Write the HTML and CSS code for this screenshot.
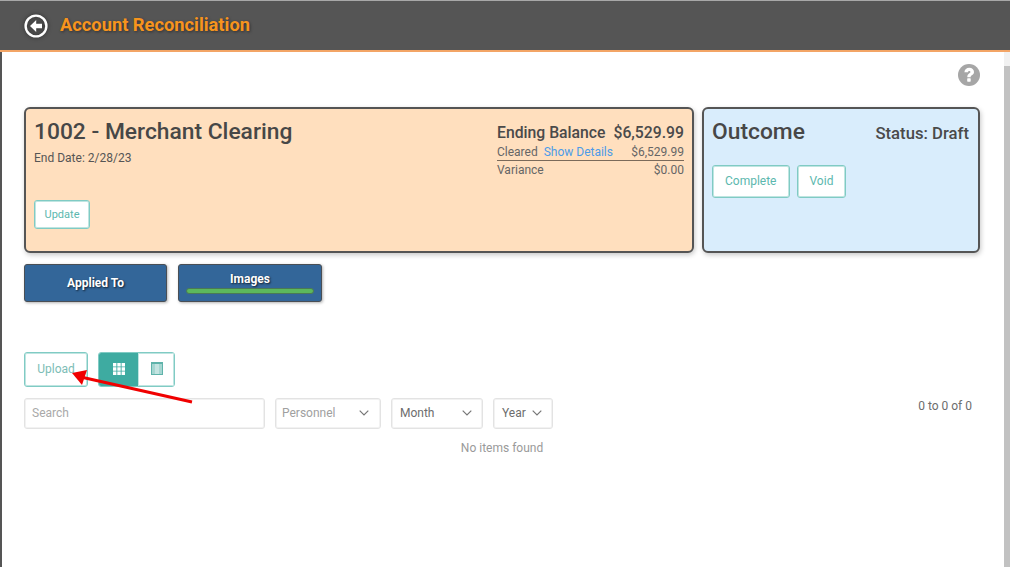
FILE: index.html
```html
<!DOCTYPE html>
<html lang="en">
<head>
<meta charset="utf-8">
<title>Account Reconciliation</title>
<link rel="stylesheet" href="styles.css">
</head>
<body>
<header class="topbar">
  <svg class="back" viewBox="0 0 24 24" width="24" height="24" aria-hidden="true">
    <circle cx="12" cy="12" r="10.4" fill="none" stroke="#fff" stroke-width="2.4"/>
    <path d="M12.2 6 6 12l6.2 6v-3.8H18V9.800h-5.800z" fill="#fff"/>
  </svg>
  <h1 class="title">Account Reconciliation</h1>
</header>
<div class="shell">
  <main class="content">
    <div class="help-row">
      <svg class="help" viewBox="0 0 24 24" width="24" height="24" aria-hidden="true">
        <circle cx="12" cy="12" r="11" fill="#a6a6a6"/>
        <path d="M7.400 9.300C7.600 6.500 9.600 4.800 12.300 4.800c2.700 0 4.700 1.700 4.700 4.100 0 1.800-1 2.700-2.200 3.400-.9.600-1.100.9-1.100 1.900h-3.400c0-2 .5-2.900 1.800-3.700.9-.6 1.300-.9 1.300-1.500 0-.6-.5-1-1.100-1-.8 0-1.200.5-1.300 1.300z" fill="#fff"/>
        <rect x="10.200" y="15.200" width="3.500" height="3.500" rx=".6" fill="#fff"/>
      </svg>
    </div>
    <section class="cards">
      <article class="card card-main">
        <div class="card-left">
          <h2 class="card-title">1002 - Merchant Clearing</h2>
          <p class="end-date">End Date: 2/28/23</p>
          <button class="btn btn-update">Update</button>
        </div>
        <div class="balance">
          <div class="balance-head"><span>Ending Balance</span><span>$6,529.99</span></div>
          <div class="balance-row cleared"><span>Cleared <a class="link">Show Details</a></span><span>$6,529.99</span></div>
          <div class="balance-row variance"><span>Variance</span><span>$0.00</span></div>
        </div>
      </article>
      <article class="card card-outcome">
        <div class="outcome-head">
          <h2 class="card-title">Outcome</h2>
          <span class="status">Status: Draft</span>
        </div>
        <div class="outcome-actions">
          <button class="btn btn-large">Complete</button>
          <button class="btn btn-large">Void</button>
        </div>
      </article>
    </section>
    <nav class="tabs">
      <button class="tab tab-applied">Applied To</button>
      <button class="tab tab-images"><span>Images</span><i class="tab-bar"></i></button>
    </nav>
    <div class="toolbar">
      <button class="btn btn-upload">Upload</button>
      <div class="toggle">
        <button class="toggle-item active" aria-label="Grid view">
          <svg viewBox="0 0 12 12" width="12" height="12" aria-hidden="true">
            <path fill="#fff" d="M0 0h3.400v3.400H0zM4.300 0h3.400v3.400H4.300zM8.600 0H12v3.400H8.600zM0 4.300h3.400v3.400H0zM4.300 4.300h3.400v3.400H4.300zM8.600 4.300H12v3.400H8.600zM0 8.600h3.400V12H0zM4.300 8.600h3.400V12H4.300zM8.600 8.600H12V12H8.600z"/>
          </svg>
        </button>
        <button class="toggle-item toggle-table" aria-label="Table view">
          <svg viewBox="0 0 12 13" width="12" height="13" aria-hidden="true">
            <rect x="0" y="0" width="12" height="13" fill="#a5d6d1"/>
            <rect x="4" y="2" width="4" height="10" fill="#c4e4e1"/>
            <path fill="#5fb3aa" d="M0 0h12v2H0zM0 0h1v13H0zM11 0h1v13h-1zM0 12h12v1H0z"/>
          </svg>
        </button>
      </div>
    </div>
    <div class="filters">
      <div class="field field-search"><span>Search</span></div>
      <div class="field field-personnel"><span>Personnel</span><svg class="chev" viewBox="0 0 10 6" width="10" height="6" aria-hidden="true"><path d="M.7.7 5 5 9.300.7" fill="none" stroke="#777" stroke-width="1.200"/></svg></div>
      <div class="field field-month"><span>Month</span><svg class="chev" viewBox="0 0 10 6" width="10" height="6" aria-hidden="true"><path d="M.7.7 5 5 9.300.7" fill="none" stroke="#777" stroke-width="1.200"/></svg></div>
      <div class="field field-year"><span>Year</span><svg class="chev" viewBox="0 0 10 6" width="10" height="6" aria-hidden="true"><path d="M.7.7 5 5 9.300.7" fill="none" stroke="#777" stroke-width="1.200"/></svg></div>
      <div class="pager">0 to 0 of 0</div>
    </div>
    <p class="empty">No items found</p>
    <svg class="arrow" viewBox="0 0 130 40" width="130" height="40" aria-hidden="true">
      <path d="M122 34 13 9.500" stroke="#f00000" stroke-width="3" fill="none"/>
      <path d="M2 5 17 2 12 17z" fill="#f00000"/>
    </svg>
  </main>
  <aside class="scrollbar"><span class="scroll-up"></span></aside>
</div>
</body>
</html>
```

FILE: styles.css
```css
* { box-sizing: border-box; }
html, body { margin: 0; height: 100%; overflow: hidden; }
body {
  font-family: Roboto, "Liberation Sans", sans-serif;
  color: #4a4a4a;
  background: #fff;
  display: flex;
  flex-direction: column;
}
.topbar {
  height: 52px;
  flex: none;
  display: flex;
  align-items: center;
  gap: 12px;
  padding: 0 0 1px 24px;
  background: #555;
  border-top: 1px solid #a8a8a8;
  border-bottom: 2px solid #f3a566;
}
.back { margin-top: 2px; filter: drop-shadow(0 0 2px rgba(0,0,0,.5)); }
.title {
  margin: 0 0 1px;
  font-size: 18.3px;
  font-weight: 700;
  color: #f7941d;
  text-shadow: 1px 1px 3px rgba(0,0,0,.45);
}
.shell { flex: 1; display: flex; min-height: 0; }
.content {
  position: relative;
  flex: 1;
  min-width: 0;
  padding: 0 24px 0 22px;
  border-left: 2px solid #555;
}
.help-row { display: flex; justify-content: flex-end; padding: 11px 0 0; height: 55px; }
.help { display: block; margin-right: -1px; }
.cards { display: flex; gap: 8px; height: 146px; }
.card {
  border: 2px solid #555;
  border-radius: 6px;
  box-shadow: 1px 2px 5px rgba(0,0,0,.22);
  padding: 9px 8px;
}
.card-main {
  width: 670px;
  flex: none;
  background: #ffdfbe;
  display: flex;
  justify-content: space-between;
}
.card-outcome { flex: 1; background: #d9edfc; padding-right: 9px; }
.card-title { margin: 0; font-size: 22.8px; line-height: 28px; font-weight: 500; color: #474747; }
.end-date { margin: 5px 0 0; font-size: 12px; line-height: 14px; color: #555; }
.btn {
  font-family: inherit;
  background: #fff;
  border: 1px solid #80cbc4;
  border-radius: 3px;
  color: #5cb8ae;
  padding: 0;
  box-shadow: inset 0 0 0 1px rgba(128,203,196,.5);
}
.btn-update { display: block; margin-top: 35px; width: 56px; height: 29px; font-size: 11px; }
.balance { width: 187px; padding-top: 4px; }
.balance-head {
  display: flex;
  justify-content: space-between;
  font-size: 15.75px;
  line-height: 22px;
  font-weight: 500;
  color: #4a4a4a;
}
.balance-row {
  display: flex;
  justify-content: space-between;
  font-size: 12px;
  line-height: 16px;
  color: #666;
}
.cleared { border-bottom: 1px solid #7b6a5a; }
.variance { line-height: 18px; }
.cleared .link { color: #4c9be8; margin-left: 3px; }
.outcome-head { display: flex; justify-content: space-between; align-items: center; }
.status { font-size: 16.7px; font-weight: 500; padding-top: 3px; }
.outcome-actions { display: flex; gap: 7px; margin-top: 19px; }
.btn-large { height: 33px; padding: 0 12px 2px; font-size: 12px; }
.tabs { display: flex; gap: 11px; margin-top: 11px; }
.tab {
  font-family: inherit;
  height: 38px;
  border: 1px solid #4a4f55;
  border-radius: 3px;
  background: #336699;
  color: #fff;
  font-size: 12px;
  font-weight: 700;
  text-shadow: 1px 1px 2px rgba(0,0,0,.7);
  box-shadow: 1px 1px 3px rgba(0,0,0,.3);
}
.tab-applied { width: 143px; }
.tab-images {
  width: 144px;
  display: flex;
  flex-direction: column;
  align-items: center;
  gap: 2px;
  padding: 7px 7px 0;
}
.tab-bar {
  display: block;
  width: 100%;
  height: 6px;
  border-radius: 3px;
  background: #5cb85c;
  border: 1px solid #4a7a55;
}
.toolbar { display: flex; gap: 10px; margin-top: 50px; height: 35px; }
.btn-upload { width: 64px; font-size: 12px; color: #7dbdb6; padding-bottom: 2px; }
.toggle {
  display: flex;
  width: 77px;
  border: 1px solid #80cbc4;
  border-radius: 3px;
  overflow: hidden;
}
.toggle-item {
  flex: 1;
  padding: 0;
  border: 0;
  background: #fff;
  display: flex;
  align-items: center;
  justify-content: center;
  box-shadow: inset 0 0 0 1px rgba(128,203,196,.5);
}
.toggle-item.active { flex: none; width: 39px; background: #3eaba1; box-shadow: none; padding: 0 0 1px 1px; }
.toggle-table { padding: 0 0 3px 2px; }
.filters { display: flex; gap: 10px; margin-top: 11px; height: 31px; }
.field {
  display: flex;
  align-items: center;
  justify-content: space-between;
  height: 31px;
  border: 1px solid #e3e3e3;
  border-radius: 3px;
  box-shadow: inset 0 0 0 1px rgba(227,227,227,.45);
  font-size: 12px;
  color: #6d6d6d;
  padding: 0 11px 2px 7px;
}
.field-search { width: 241px; color: #a9a9a9; }
.field-personnel { width: 106px; color: #a0a0a0; padding-left: 6px; }
.field-month { width: 92px; padding-left: 8px; padding-right: 10px; }
.field-year { width: 60px; padding-left: 8px; padding-right: 10px; }
.pager {
  margin-left: auto;
  padding: 0 8px 16px 0;
  font-size: 12px;
  line-height: 14px;
  align-self: center;
  color: #6d6d6d;
}
.empty {
  margin: 12px 0 0;
  text-align: center;
  font-size: 12px;
  line-height: 14px;
  color: #9a9a9a;
}
.arrow { position: absolute; left: 68px; top: 316px; }
.scrollbar {
  width: 6px;
  flex: none;
  background: #c2c2c2;
  position: relative;
}
.scroll-up { position: absolute; left: 0; right: 0; top: 0; height: 14px; background: #f1f1f1; }
```
